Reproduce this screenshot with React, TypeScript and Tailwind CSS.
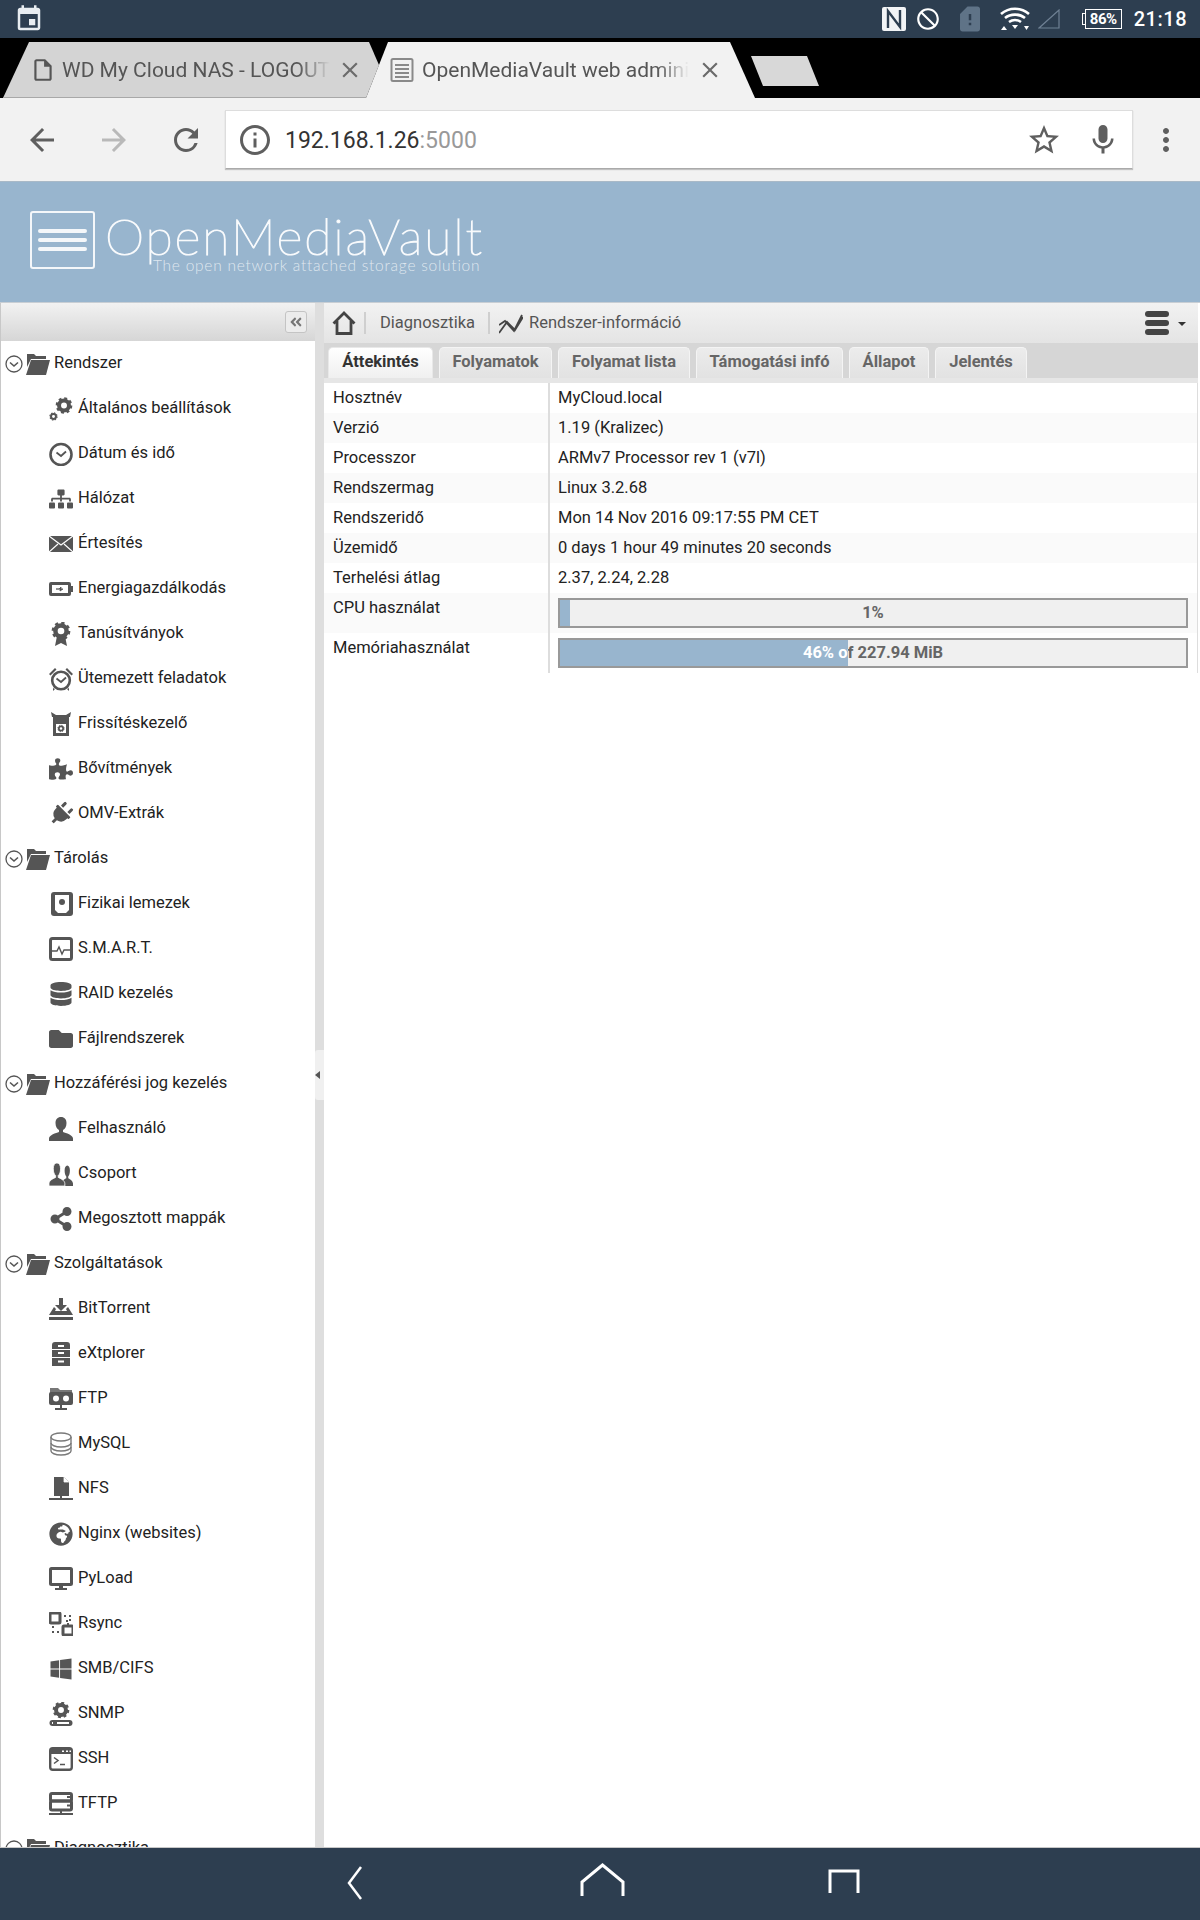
import type { ReactNode } from "react";
import {
  MdArrowBack,
  MdArrowForward,
  MdClose,
  MdDoNotDisturb,
  MdEvent,
  MdInfoOutline,
  MdMic,
  MdMoreVert,
  MdOutlineInsertDriveFile,
  MdRefresh,
  MdSimCardAlert,
  MdStarBorder,
} from "react-icons/md";
import {
  FaAngleDoubleLeft,
  FaDatabase,
  FaFolder,
  FaGlobeAfrica,
  FaPlug,
  FaPuzzlePiece,
  FaShareAlt,
  FaSitemap,
  FaWindows,
} from "react-icons/fa";

const Svg = ({ children }: { children: ReactNode }) => (
  <svg viewBox="0 0 24 24" className="size-6" fill="#555555">
    {children}
  </svg>
);

const Gear = ({ x, y, r }: { x: number; y: number; r: number }) => (
  <g>
    <circle cx={x} cy={y} r={r * 0.62} fill="none" stroke="#555555" strokeWidth={r * 0.5} />
    <circle
      cx={x}
      cy={y}
      r={r * 0.9}
      fill="none"
      stroke="#555555"
      strokeWidth={r * 0.28}
      strokeDasharray={`${r * 0.36} ${r * 0.347}`}
    />
  </g>
);

const ClockFace = ({ y = 12, r = 10 }: { y?: number; r?: number }) => (
  <g fill="none" stroke="#555555">
    <circle cx="12" cy={y} r={r} strokeWidth="2.600" />
    <path d={`M7.500 ${y - 2}L12 ${y + 1.500}L17 ${y - 3}`} strokeWidth="1.800" />
  </g>
);

const bust =
  "M12 0c3.500 0 5.500 2.500 5.500 6s-1.500 6-3.500 7v2c3 1 10 3 10 6.500V24H0v-2.500C0 18 7 16 10 15v-2C8 12 6.500 9.500 6.500 6S8.500 0 12 0z";

const icons: Record<string, ReactNode> = {
  settings: (
    <Svg>
      <Gear x={15} y={8.500} r={8} />
      <Gear x={4.500} y={19.500} r={4} />
    </Svg>
  ),
  clock: (
    <Svg>
      <ClockFace y={12.500} r={10.500} />
    </Svg>
  ),
  network: <FaSitemap className="size-6 text-[#555555]" />,
  mail: (
    <Svg>
      <path d="M0 4h24v16H0z" />
      <path d="M0 4l12 9 12-9M0 20l9-8M24 20l-9-8" fill="none" stroke="#ffffff" strokeWidth="1.200" />
    </Svg>
  ),
  power: (
    <Svg>
      <path d="M2 5h18a2 2 0 0 1 2 2v2h2v6h-2v2a2 2 0 0 1-2 2H2a2 2 0 0 1-2-2V7a2 2 0 0 1 2-2z" />
      <rect x="3" y="8" width="16" height="8" fill="#ffffff" />
      <path d="M7 12h3l2-2v2h2l-3 2v-2z" stroke="#555555" strokeWidth=".8" />
    </Svg>
  ),
  cert: (
    <Svg>
      <path d="M8 14l-2 10 6-3 6 3-2-10z" />
      <Gear x={12} y={9} r={9} />
    </Svg>
  ),
  alarm: (
    <Svg>
      <ClockFace y={13.500} r={8.800} />
      <path d="M0 7l6-6 1.500 1.500-6 6zM24 7l-6-6-1.500 1.500 6 6zM4 21l2 1-2 2zM20 21l-2 1 2 2z" />
    </Svg>
  ),
  update: (
    <Svg>
      <path d="M2 0l5 3h10l5-3-1 5h-1v2H4V5H3zM4 7h16v17H4z" />
      <rect x="7" y="12" width="10" height="9" fill="#ffffff" />
      <Gear x={12} y={16.500} r={3.500} />
    </Svg>
  ),
  plugin: <FaPuzzlePiece className="size-6 text-[#555555]" />,
  plug: <FaPlug className="size-6 rotate-45 text-[#555555]" />,
  disk: (
    <Svg>
      <rect x="2" y="0" width="22" height="24" rx="3" />
      <path d="M6 3h14v15l-3 3H9l-3-3z" fill="#ffffff" />
      <circle cx="13" cy="10" r="3" />
    </Svg>
  ),
  smart: (
    <Svg>
      <rect x="1.500" y="1.500" width="21" height="21" rx="2" fill="none" stroke="#555555" strokeWidth="3" />
      <path d="M3 14h5l2-4 3 7 2-4h6" fill="none" stroke="#555555" strokeWidth="1.400" />
    </Svg>
  ),
  raid: <FaDatabase className="size-6 text-[#555555]" />,
  folder: <FaFolder className="size-6 text-[#555555]" />,
  user: (
    <Svg>
      <path d={bust} />
    </Svg>
  ),
  users: (
    <Svg>
      <path d={bust} transform="translate(12.500 3.500) scale(.48 .85)" />
      <path d={bust} transform="translate(0 1) scale(.66 .96)" stroke="#ffffff" strokeWidth="1" />
    </Svg>
  ),
  share: <FaShareAlt className="size-6 text-[#555555]" />,
  torrent: (
    <Svg>
      <path d="M10 1h4v7h4l-6 6-6-6h4z" />
      <path d="M5 10l-5 8h24l-5-8-2 2 1 2H6l1-2z" />
      <path d="M0 20h24v3H0z" />
    </Svg>
  ),
  cabinet: (
    <Svg>
      <path d="M6 0h12a3 3 0 0 1 3 3v4H3V3a3 3 0 0 1 3-3zM3 8h18v7H3zM3 16h18v8H3z" />
      <path d="M9 4h6M9 11h6M9 19.500h6" stroke="#ffffff" strokeWidth="2" />
    </Svg>
  ),
  ftp: (
    <Svg>
      <path d="M1 1h8l2 2h12v4H1z" opacity=".8" />
      <rect x="0" y="5" width="24" height="13" rx="2" />
      <circle cx="7" cy="11.500" r="3" fill="#ffffff" />
      <circle cx="17" cy="11.500" r="3" fill="#ffffff" />
      <path d="M11 18h2v3h5v2H6v-2h5z" />
    </Svg>
  ),
  mysql: (
    <Svg>
      <g fill="#ffffff" stroke="#7a7a7a" strokeWidth="1.400">
        <path d="M2 5v14c0 2 4 4 10 4s10-2 10-4V5" />
        <ellipse cx="12" cy="5" rx="10" ry="4" />
        <path d="M2 11c0 2 4 4 10 4s10-2 10-4M2 15c0 2 4 4 10 4s10-2 10-4" fill="none" />
      </g>
    </Svg>
  ),
  nfs: (
    <Svg>
      <path d="M5 0h10l5 5v14H5z" />
      <path d="M15 0v5h5" fill="#ffffff" stroke="#ffffff" strokeWidth=".8" />
      <path d="M11 19h2v2h11v2H0v-2h11z" />
    </Svg>
  ),
  globe: <FaGlobeAfrica className="size-6 text-[#555555]" />,
  monitor: (
    <Svg>
      <rect x="1.500" y="1.500" width="21" height="16" rx="1" fill="none" stroke="#555555" strokeWidth="3" />
      <path d="M10 19h4v2h4v2H6v-2h4z" />
    </Svg>
  ),
  rsync: (
    <Svg>
      <rect x="1" y="1" width="10" height="10" rx="1" fill="none" stroke="#555555" strokeWidth="3" />
      <rect x="14" y="14" width="10" height="9" rx="1" fill="none" stroke="#555555" strokeWidth="3" />
      <path d="M15 3h2v2h-2zM20 3h2v2h-2zM20 7h2v2h-2zM17 10h2v-2h-2zM3 14h2v2H3zM3 19h2v2H3zM8 19h2v2H8zM18 11h2v3h-2z" />
    </Svg>
  ),
  windows: <FaWindows className="size-6 text-[#555555]" />,
  snmp: (
    <Svg>
      <Gear x={12} y={8} r={8} />
      <rect x="0.500" y="18" width="23" height="6" rx="3" />
      <path d="M3 21h1M8 21h12" stroke="#ffffff" strokeWidth="2" />
    </Svg>
  ),
  terminal: (
    <Svg>
      <rect x="1.200" y="1.200" width="21.600" height="21.600" rx="2.500" fill="none" stroke="#555555" strokeWidth="2.400" />
      <path d="M1 2h22v5H1z" />
      <path d="M13 4.200h2M17 4.200h2M20.500 4.200h1.500" stroke="#ffffff" strokeWidth="1.400" />
      <path d="M5 10.500l4 3-4 3M11 17.500h5" fill="none" stroke="#555555" strokeWidth="1.500" />
    </Svg>
  ),
  server: (
    <Svg>
      <rect x="1.500" y="1.500" width="21" height="7.500" rx="1.500" fill="none" stroke="#555555" strokeWidth="3" />
      <rect x="1.500" y="9" width="21" height="9" rx="1.500" fill="none" stroke="#555555" strokeWidth="3" />
      <path d="M11 18h2v3h11v2H0v-2h11zM18 4h3v2h-3zM18 12.500h3v2h-3z" />
    </Svg>
  ),
};

const tree: { label: string; children: [string, string][] }[] = [
  {
    label: "Rendszer",
    children: [
      ["settings", "Általános beállítások"],
      ["clock", "Dátum és idő"],
      ["network", "Hálózat"],
      ["mail", "Értesítés"],
      ["power", "Energiagazdálkodás"],
      ["cert", "Tanúsítványok"],
      ["alarm", "Ütemezett feladatok"],
      ["update", "Frissítéskezelő"],
      ["plugin", "Bővítmények"],
      ["plug", "OMV-Extrák"],
    ],
  },
  {
    label: "Tárolás",
    children: [
      ["disk", "Fizikai lemezek"],
      ["smart", "S.M.A.R.T."],
      ["raid", "RAID kezelés"],
      ["folder", "Fájlrendszerek"],
    ],
  },
  {
    label: "Hozzáférési jog kezelés",
    children: [
      ["user", "Felhasználó"],
      ["users", "Csoport"],
      ["share", "Megosztott mappák"],
    ],
  },
  {
    label: "Szolgáltatások",
    children: [
      ["torrent", "BitTorrent"],
      ["cabinet", "eXtplorer"],
      ["ftp", "FTP"],
      ["mysql", "MySQL"],
      ["nfs", "NFS"],
      ["globe", "Nginx (websites)"],
      ["monitor", "PyLoad"],
      ["rsync", "Rsync"],
      ["windows", "SMB/CIFS"],
      ["snmp", "SNMP"],
      ["terminal", "SSH"],
      ["server", "TFTP"],
    ],
  },
  { label: "Diagnosztika", children: [] },
];

const infoRows = [
  ["Hosztnév", "MyCloud.local"],
  ["Verzió", "1.19 (Kralizec)"],
  ["Processzor", "ARMv7 Processor rev 1 (v7l)"],
  ["Rendszermag", "Linux 3.2.68"],
  ["Rendszeridő", "Mon 14 Nov 2016 09:17:55 PM CET"],
  ["Üzemidő", "0 days 1 hour 49 minutes 20 seconds"],
  ["Terhelési átlag", "2.37, 2.24, 2.28"],
];

const tabs = [
  { label: "Folyamatok", w: "w-[113px]" },
  { label: "Folyamat lista", w: "w-[132px]" },
  { label: "Támogatási infó", w: "w-[147px]" },
  { label: "Állapot", w: "w-[80px]" },
  { label: "Jelentés", w: "w-[92px]" },
];

function StatusBar() {
  return (
    <div className="flex h-[38px] shrink-0 items-center bg-[#2d3e50] text-white">
      <MdEvent className="ml-[14px] size-[30px] text-[#e8edf1]" />
      <div className="ml-auto flex items-center">
        <svg viewBox="0 0 24 24" className="size-6" fill="#f2f4f6">
          <rect width="24" height="24" rx="2" />
          <path d="M6 21V4l12 16V3" fill="none" stroke="#2d3e50" strokeWidth="2.400" />
        </svg>
        <MdDoNotDisturb className="ml-[9px] size-[26px]" />
        <MdSimCardAlert className="ml-[14px] size-[30px] text-[#5f7387]" />
        <svg viewBox="0 0 30 24" className="ml-[15px] h-[24px] w-[30px]" fill="none" stroke="#ffffff" strokeWidth="2.600">
          <path d="M1 7c8-7 20-7 28 0M5 11c5.500-4.500 14.500-4.500 20 0M9 15c3.500-2.500 8.500-2.500 12 0" />
          <path d="M12 18h6l-3 4zM4 19l3 4H1zM24 19h5l-2.500 4z" fill="#ffffff" stroke="none" />
        </svg>
        <svg viewBox="0 0 22 20" className="ml-[8px] h-[20px] w-[22px]" fill="none" stroke="#6f8194" strokeWidth="1.200">
          <path d="M21 1v18H1z" />
        </svg>
        <div className="relative ml-[25px] flex h-[20px] w-[37px] items-center justify-center border border-white text-[15px] font-bold tracking-tight before:absolute before:-left-[4px] before:top-[3px] before:h-[12px] before:w-[3px] before:border-y before:border-l before:border-white before:content-['']">
          86%
        </div>
        <span className="ml-[12px] mr-[13px] text-[20px] font-medium tracking-[0.5px]">21:18</span>
      </div>
    </div>
  );
}

function TabStrip() {
  return (
    <div className="flex h-[60px] shrink-0 bg-black pl-[3px] pt-[4px]">
      <div className="flex h-[56px] w-[376px] items-center border-b border-[#a8a8a8] bg-[#d4d4d4] pl-[27px] [clip-path:polygon(0_56px,26px_0,366px_0,376px_23px,363px_56px)]">
        <MdOutlineInsertDriveFile className="size-[26px] text-[#555555]" />
        <span className="ml-[6px] w-[268px] overflow-hidden whitespace-nowrap pt-[2px] text-[21px] text-[#555555] [mask-image:linear-gradient(to_right,black_88%,transparent_100%)]">
          WD My Cloud NAS - LOGOUT
        </span>
        <MdClose className="ml-[7px] size-[26px] text-[#6b6b6b]" />
      </div>
      <div className="-ml-[13px] flex h-[56px] w-[389px] items-center bg-[#f2f2f2] pl-[24px] [clip-path:polygon(0_56px,22px_0,364px_0,389px_56px)]">
        <svg viewBox="0 0 24 24" className="size-6" fill="none" stroke="#8a8a8a">
          <rect x="1.500" y="1" width="21" height="22" rx="1.500" strokeWidth="2" />
          <path d="M5 7h14M5 11h14M5 15h14M5 19h14" strokeWidth="2" />
        </svg>
        <span className="ml-[8px] w-[267px] overflow-hidden whitespace-nowrap pt-[2px] text-[21px] text-[#555555] [mask-image:linear-gradient(to_right,black_88%,transparent_100%)]">
          OpenMediaVault web administration
        </span>
        <MdClose className="ml-[8px] size-[26px] text-[#6b6b6b]" />
      </div>
      <div className="-ml-[4px] mt-[14px] h-[30px] w-[68px] bg-[#d8d8d8] [clip-path:polygon(0_0,56px_0,68px_30px,12px_30px)]" />
    </div>
  );
}

function Toolbar() {
  return (
    <div className="flex h-[84px] shrink-0 items-center border-b border-[#a9b9c7] bg-[#f2f2f2] pl-[24px]">
      <MdArrowBack className="size-9 text-[#5f5f5f]" />
      <MdArrowForward className="ml-9 size-9 text-[#b9b9b9]" />
      <MdRefresh className="ml-9 size-9 text-[#5f5f5f]" />
      <div className="ml-[21px] flex h-[59px] w-[908px] items-center border border-[#dddddd] border-b-[#aaaaaa] bg-white pl-[11px] pr-[11px] shadow-[0_1px_1px_rgba(0,0,0,0.2)]">
        <MdInfoOutline className="size-9 text-[#5f5f5f]" />
        <span className="ml-[12px] pt-[4px] text-[23px] text-[#333333]">
          192.168.1.26<span className="text-[#999999]">:5000</span>
        </span>
        <MdStarBorder className="ml-auto size-9 text-[#5f5f5f]" />
        <MdMic className="ml-[23px] size-9 text-[#5f5f5f]" />
      </div>
      <MdMoreVert className="ml-[15px] size-9 text-[#5f5f5f]" />
    </div>
  );
}

function Logo() {
  return (
    <div className="flex h-[120px] shrink-0 bg-[#98b5ce] pl-[30px] pt-[29px] text-white">
      <svg viewBox="0 0 65 58" className="h-[58px] w-[65px]" fill="none" stroke="#f4f7fa">
        <rect x="1" y="1" width="63" height="56" rx="2" strokeWidth="2" />
        <path d="M10 20h45M10 29h45M10 38h45" strokeWidth="4" strokeLinecap="round" />
      </svg>
      <div className="relative ml-[10px] font-['Lato',sans-serif]">
        <div className="mt-[5px] whitespace-nowrap text-[50px] font-thin leading-[40px] tracking-[1.900px] [-webkit-text-stroke:1.200px_#f8fafc]">
          OpenMediaVault
        </div>
        <div className="absolute left-[48px] top-[47px] whitespace-nowrap text-[15.500px] font-light leading-[14px] tracking-[0.750px] text-white/70">
          The open network attached storage solution
        </div>
      </div>
    </div>
  );
}

function Sidebar() {
  return (
    <div className="flex w-[315px] shrink-0 flex-col overflow-hidden border-l border-[#c8c8c8] bg-white">
      <div className="flex h-[38px] shrink-0 items-center justify-end bg-gradient-to-b from-[#f2f2f2] to-[#d6d6d6] pr-[8px]">
        <div className="flex h-[22px] w-[22px] items-center justify-center rounded-[3px] border border-[#c4c4c4] bg-[#ececec]">
          <FaAngleDoubleLeft className="size-[14px] text-[#777777]" />
        </div>
      </div>
      {tree.map((group) => (
        <div key={group.label}>
          <div className="flex h-[45px] items-center pl-[4px]">
            <svg viewBox="0 0 18 18" className="size-[18px]" fill="none" stroke="#555555" strokeWidth="1.300">
              <circle cx="9" cy="9" r="8" />
              <path d="M5 7.500l4 3.500 4-3.500" strokeWidth="1.600" />
            </svg>
            <svg viewBox="0 0 24 22" className="ml-[3px] h-[22px] w-[24px]" fill="#555555">
              <path d="M1 1h7l2 2h10v3H5L1 14z" />
              <path d="M5 7h19l-4 15H0z" />
            </svg>
            <span className="ml-[4px] whitespace-nowrap text-[16.500px] text-[#222222]">{group.label}</span>
          </div>
          {group.children.map(([icon, label]) => (
            <div key={label} className="flex h-[45px] items-center pl-[48px]">
              {icons[icon]}
              <span className="ml-[5px] whitespace-nowrap text-[16.500px] text-[#222222]">{label}</span>
            </div>
          ))}
        </div>
      ))}
    </div>
  );
}

function Splitter() {
  return (
    <div className="flex w-[9px] shrink-0 flex-col justify-center bg-[#dedede]">
      <div className="flex h-[50px] items-center rounded-l-[3px] bg-[#f0f0f0]">
        <div className="h-0 w-0 border-y-[4px] border-r-[5px] border-y-transparent border-r-[#555555]" />
      </div>
    </div>
  );
}

function Progress({ value, text }: { value: number; text: string }) {
  return (
    <div className="relative h-[30px] w-[630px] border-2 border-[#999999] bg-[#f0f0f0]">
      <div className="flex h-full items-center justify-center text-[16.500px] font-bold text-[#666666]">{text}</div>
      <div className="absolute inset-y-0 left-0 overflow-hidden bg-[#98b5ce]" style={{ width: `${value}%` }}>
        <div className="flex h-full w-[626px] items-center justify-center text-[16.500px] font-bold text-white">{text}</div>
      </div>
    </div>
  );
}

function Content() {
  return (
    <div className="flex min-w-0 flex-1 flex-col bg-white pr-[2px]">
      <div className="flex h-[40px] shrink-0 items-center bg-gradient-to-b from-[#f2f2f2] to-[#e4e4e4] text-[16.500px] text-[#555555]">
        <svg viewBox="0 0 24 24" className="ml-[8px] size-6" fill="none" stroke="#444444" strokeWidth="2.800">
          <path d="M1.500 12.500L12 2l10.500 10.500M5 10v12.500h14V10" />
        </svg>
        <div className="ml-[8px] h-[22px] w-[2px] bg-[#cfcfcf]" />
        <span className="ml-[14px]">Diagnosztika</span>
        <div className="ml-[13px] h-[22px] w-[2px] bg-[#cfcfcf]" />
        <svg viewBox="0 0 24 24" className="ml-[9px] size-6" fill="none" stroke="#444444">
          <path d="M0 22l8-11 8 8 8-13M0 14l6-4 9 10 8-16" strokeWidth="1.800" />
        </svg>
        <span className="ml-[6px]">Rendszer-információ</span>
        <div className="ml-auto mr-[12px] flex items-center">
          <svg viewBox="0 0 24 24" className="size-6" fill="#444444">
            <rect y="0" width="24" height="6" rx="3" />
            <rect y="9" width="24" height="6" rx="3" />
            <rect y="18" width="24" height="6" rx="3" />
          </svg>
          <div className="ml-[9px] mt-[2px] h-0 w-0 border-x-[4px] border-t-[4px] border-x-transparent border-t-[#333333]" />
        </div>
      </div>
      <div className="flex h-[40px] shrink-0 items-start gap-[6px] border-b-[5px] border-[#e6e6e6] bg-[#d6d6d6] pl-[4px] pt-[4px]">
        <div className="flex h-[31px] w-[105px] items-center justify-center rounded-t-[5px] border border-b-0 border-[#e8e8e8] bg-gradient-to-b from-white to-[#f0f0f0] pb-[1px] text-[16.500px] font-bold text-[#333333]">
          Áttekintés
        </div>
        {tabs.map((tab) => (
          <div
            key={tab.label}
            className={`flex h-[31px] ${tab.w} items-center justify-center rounded-t-[5px] border border-b-0 border-[#f4f4f4] bg-gradient-to-b from-[#ececec] to-[#e2e2e2] pb-[1px] text-[16.500px] font-bold text-[#666666]`}
          >
            {tab.label}
          </div>
        ))}
      </div>
      <div className="border-r border-[#dddddd] text-[16.500px] text-[#222222]">
        {infoRows.map(([label, value], i) => (
          <div key={label} className={`flex h-[30px] items-center ${i % 2 === 1 ? "bg-[#fafafa]" : "bg-white"}`}>
            <div className="w-[224px] pl-[9px]">{label}</div>
            <div className="flex h-full items-center border-l-2 border-[#dddddd] pl-[8px]">{value}</div>
          </div>
        ))}
        <div className="flex h-[40px] bg-[#fafafa]">
          <div className="w-[224px] pl-[9px] pt-[3px] leading-[24px]">CPU használat</div>
          <div className="flex-1 border-l-2 border-[#dddddd] pl-[8px] pt-[5px]">
            <Progress value={1.600} text="1%" />
          </div>
        </div>
        <div className="flex h-[40px] bg-white">
          <div className="w-[224px] pl-[9px] pt-[3px] leading-[24px]">Memóriahasználat</div>
          <div className="flex-1 border-l-2 border-[#dddddd] pl-[8px] pt-[5px]">
            <Progress value={46} text="46% of 227.94 MiB" />
          </div>
        </div>
      </div>
    </div>
  );
}

function NavBar() {
  return (
    <div className="flex h-[73px] shrink-0 items-start border-t border-[#c8c8c8] bg-[#2d3e50]">
      <svg viewBox="0 0 600 72" className="mx-auto h-[72px] w-[600px]" fill="none" stroke="#ffffff" strokeWidth="3">
        <path d="M61 19L49 35l12 16" strokeWidth="2.500" />
        <path d="M282 48V34l20.500-17L323 34v14" />
        <path d="M530 45V23h28v22" />
      </svg>
    </div>
  );
}

export default function App() {
  return (
    <div className="flex h-[1920px] w-[1200px] flex-col overflow-hidden bg-white font-['Roboto',sans-serif]">
      <StatusBar />
      <TabStrip />
      <Toolbar />
      <Logo />
      <div className="flex min-h-0 flex-1 border-t border-[#c8ced4]">
        <Sidebar />
        <Splitter />
        <Content />
      </div>
      <NavBar />
    </div>
  );
}
